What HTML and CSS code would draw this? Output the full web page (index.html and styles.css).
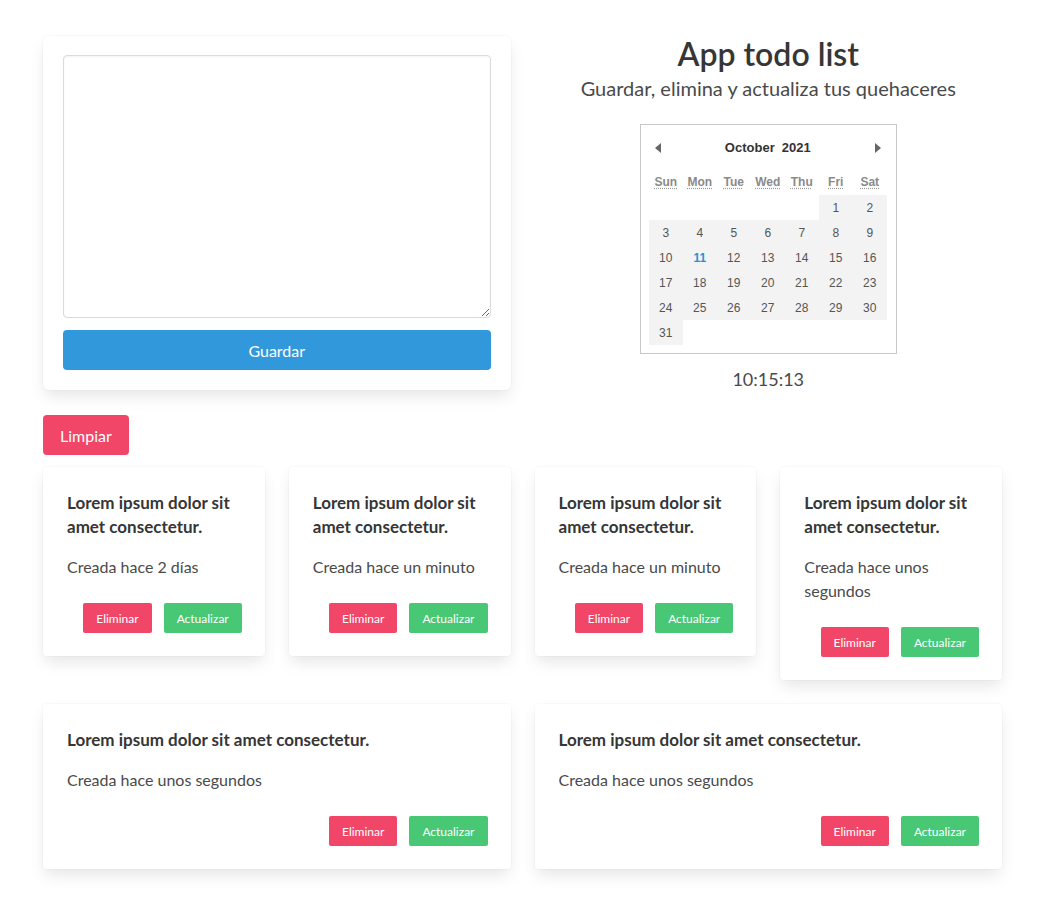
FILE: index.html
```html
<!DOCTYPE html>
<html lang="es">
<head>
<meta charset="utf-8">
<title>App todo list</title>
<link rel="stylesheet" href="styles.css">
</head>
<body>
<div class="page">
  <div class="top">
    <div class="box">
      <textarea class="textarea" rows="10"></textarea>
      <button class="btn btn-info btn-full">Guardar</button>
    </div>
    <div class="hero">
      <h1 class="title">App todo list</h1>
      <p class="subtitle">Guardar, elimina y actualiza tus quehaceres</p>
      <div class="calendar">
        <div class="cal-nav">
          <span class="arrow arrow-left"></span>
          <span class="cal-title"><span>October</span><span>2021</span></span>
          <span class="arrow arrow-right"></span>
        </div>
        <div class="cal-weekdays">
          <abbr title="Sunday">Sun</abbr><abbr title="Monday">Mon</abbr><abbr title="Tuesday">Tue</abbr><abbr title="Wednesday">Wed</abbr><abbr title="Thursday">Thu</abbr><abbr title="Friday">Fri</abbr><abbr title="Saturday">Sat</abbr>
        </div>
        <div class="cal-days">
          <span class="empty"></span><span class="empty"></span><span class="empty"></span><span class="empty"></span><span class="empty"></span><span class="day">1</span><span class="day">2</span>
          <span class="day">3</span><span class="day">4</span><span class="day">5</span><span class="day">6</span><span class="day">7</span><span class="day">8</span><span class="day">9</span>
          <span class="day">10</span><span class="day today">11</span><span class="day">12</span><span class="day">13</span><span class="day">14</span><span class="day">15</span><span class="day">16</span>
          <span class="day">17</span><span class="day">18</span><span class="day">19</span><span class="day">20</span><span class="day">21</span><span class="day">22</span><span class="day">23</span>
          <span class="day">24</span><span class="day">25</span><span class="day">26</span><span class="day">27</span><span class="day">28</span><span class="day">29</span><span class="day">30</span>
          <span class="day">31</span><span class="empty"></span><span class="empty"></span><span class="empty"></span><span class="empty"></span><span class="empty"></span><span class="empty"></span>
        </div>
      </div>
      <p class="clock">10:15:13</p>
    </div>
  </div>

  <button class="btn btn-danger btn-clear">Limpiar</button>

  <div class="cards">
    <div class="card">
      <p class="card-title">Lorem ipsum dolor sit amet consectetur.</p>
      <p class="card-meta">Creada hace 2 días</p>
      <div class="card-actions">
        <button class="btn btn-small btn-danger">Eliminar</button>
        <button class="btn btn-small btn-success">Actualizar</button>
      </div>
    </div>
    <div class="card">
      <p class="card-title">Lorem ipsum dolor sit amet consectetur.</p>
      <p class="card-meta">Creada hace un minuto</p>
      <div class="card-actions">
        <button class="btn btn-small btn-danger">Eliminar</button>
        <button class="btn btn-small btn-success">Actualizar</button>
      </div>
    </div>
    <div class="card">
      <p class="card-title">Lorem ipsum dolor sit amet consectetur.</p>
      <p class="card-meta">Creada hace un minuto</p>
      <div class="card-actions">
        <button class="btn btn-small btn-danger">Eliminar</button>
        <button class="btn btn-small btn-success">Actualizar</button>
      </div>
    </div>
    <div class="card">
      <p class="card-title">Lorem ipsum dolor sit amet consectetur.</p>
      <p class="card-meta">Creada hace unos segundos</p>
      <div class="card-actions">
        <button class="btn btn-small btn-danger">Eliminar</button>
        <button class="btn btn-small btn-success">Actualizar</button>
      </div>
    </div>
    <div class="card card-wide">
      <p class="card-title">Lorem ipsum dolor sit amet consectetur.</p>
      <p class="card-meta">Creada hace unos segundos</p>
      <div class="card-actions">
        <button class="btn btn-small btn-danger">Eliminar</button>
        <button class="btn btn-small btn-success">Actualizar</button>
      </div>
    </div>
    <div class="card card-wide">
      <p class="card-title">Lorem ipsum dolor sit amet consectetur.</p>
      <p class="card-meta">Creada hace unos segundos</p>
      <div class="card-actions">
        <button class="btn btn-small btn-danger">Eliminar</button>
        <button class="btn btn-small btn-success">Actualizar</button>
      </div>
    </div>
  </div>
</div>
</body>
</html>
```

FILE: styles.css
```css
* { box-sizing: border-box; }

html, body {
  margin: 0;
  padding: 0;
  background: #ffffff;
}

body {
  font-family: Lato, "Open Sans", "Noto Sans", sans-serif;
  font-size: 16px;
  line-height: 1.5;
  color: #4a4a4a;
}

.page {
  width: 960px;
  margin: 0 auto;
  padding: 36px 0 40px 1px;
}

.top {
  display: grid;
  grid-template-columns: 1fr 1fr;
  column-gap: 24px;
  align-items: start;
}

.box {
  background: #fff;
  border-radius: 6px;
  padding: 19px 20px 20px;
  box-shadow: 0 0.5em 1em -0.125em rgba(10, 10, 10, 0.1), 0 0 0 1px rgba(10, 10, 10, 0.02);
}

.textarea {
  display: block;
  width: 100%;
  height: 263px;
  border: 1px solid #dbdbdb;
  border-radius: 4px;
  padding: 11px;
  font: inherit;
  color: #363636;
  background: #fff;
  box-shadow: inset 0 0.0625em 0.125em rgba(10, 10, 10, 0.05);
  resize: vertical;
  outline: none;
}

.btn {
  display: inline-flex;
  align-items: center;
  justify-content: center;
  height: 40px;
  padding: 0 16px;
  border: 1px solid transparent;
  border-radius: 4px;
  font-family: inherit;
  font-size: 16px;
  color: #fff;
  cursor: pointer;
}

.btn-full {
  width: 100%;
  margin-top: 12px;
}

.btn-info { background: #3298dc; }
.btn-danger { background: #f14668; }
.btn-success { background: #48c774; }

.btn-small {
  height: 30px;
  padding: 0 12px;
  font-size: 12px;
  border-radius: 2px;
}

.btn-clear {
  margin-top: 25px;
}

/* hero */
.hero {
  text-align: center;
}

.title {
  margin: 0;
  font-size: 32px;
  font-weight: 600;
  line-height: 36px;
  color: #363636;
}

.subtitle {
  margin: 4px 0 0;
  font-size: 20px;
  line-height: 25px;
  color: #4a4a4a;
}

.calendar {
  display: inline-block;
  width: 257px;
  margin-top: 23px;
  border: 1px solid #c8c8c8;
  padding: 9px 9px 8px 8px;
  text-align: center;
  font-family: "Liberation Sans", Arial, sans-serif;
  color: #555;
}

.cal-nav {
  display: flex;
  align-items: center;
  justify-content: space-between;
  height: 28px;
  padding: 0 6px 0 6px;
}

.arrow {
  width: 0;
  height: 0;
  border-top: 5px solid transparent;
  border-bottom: 5px solid transparent;
}

.arrow-left { border-right: 6px solid #666; }
.arrow-right { border-left: 6px solid #666; }

.cal-title {
  display: flex;
  gap: 7px;
  font-size: 13px;
  font-weight: 700;
  color: #333;
}

.cal-weekdays {
  display: grid;
  grid-template-columns: repeat(7, 34px);
  height: 26px;
  margin-top: 7px;
  align-items: center;
}

.cal-weekdays abbr {
  font-size: 12px;
  font-weight: 700;
  color: #8a8a8a;
  text-decoration: underline dotted #9a9a9a;
  text-underline-offset: 2px;
}

.cal-days {
  display: grid;
  grid-template-columns: repeat(7, 34px);
  grid-auto-rows: 25px;
  margin-top: 0;
}

.cal-days span {
  display: flex;
  align-items: center;
  justify-content: center;
  font-size: 12px;
  color: #555;
}

.cal-days .day { background: #f3f3f3; }

.cal-days .today {
  color: #2a8fd8;
  font-weight: 700;
}

.clock {
  margin: 14px 0 0;
  font-size: 18px;
  line-height: 22px;
  color: #4a4a4a;
}

/* cards */
.cards {
  display: grid;
  grid-template-columns: repeat(4, 1fr);
  column-gap: 24px;
  row-gap: 24px;
  align-items: start;
  margin-top: 12px;
}

.card {
  background: #fff;
  border-radius: 4px;
  padding: 24px 23px 23px 24px;
  box-shadow: 0 0.5em 1em -0.125em rgba(10, 10, 10, 0.1), 0 0 0 1px rgba(10, 10, 10, 0.02);
}

.card-wide {
  grid-column: span 2;
}

.card-title {
  margin: 0;
  font-size: 17px;
  font-weight: 700;
  line-height: 24px;
  color: #363636;
}

.card-meta {
  margin: 16px 0 0;
  font-size: 16px;
  line-height: 24px;
  color: #4a4a4a;
}

.card-actions {
  display: flex;
  justify-content: flex-end;
  gap: 12px;
  margin-top: 24px;
}
```
